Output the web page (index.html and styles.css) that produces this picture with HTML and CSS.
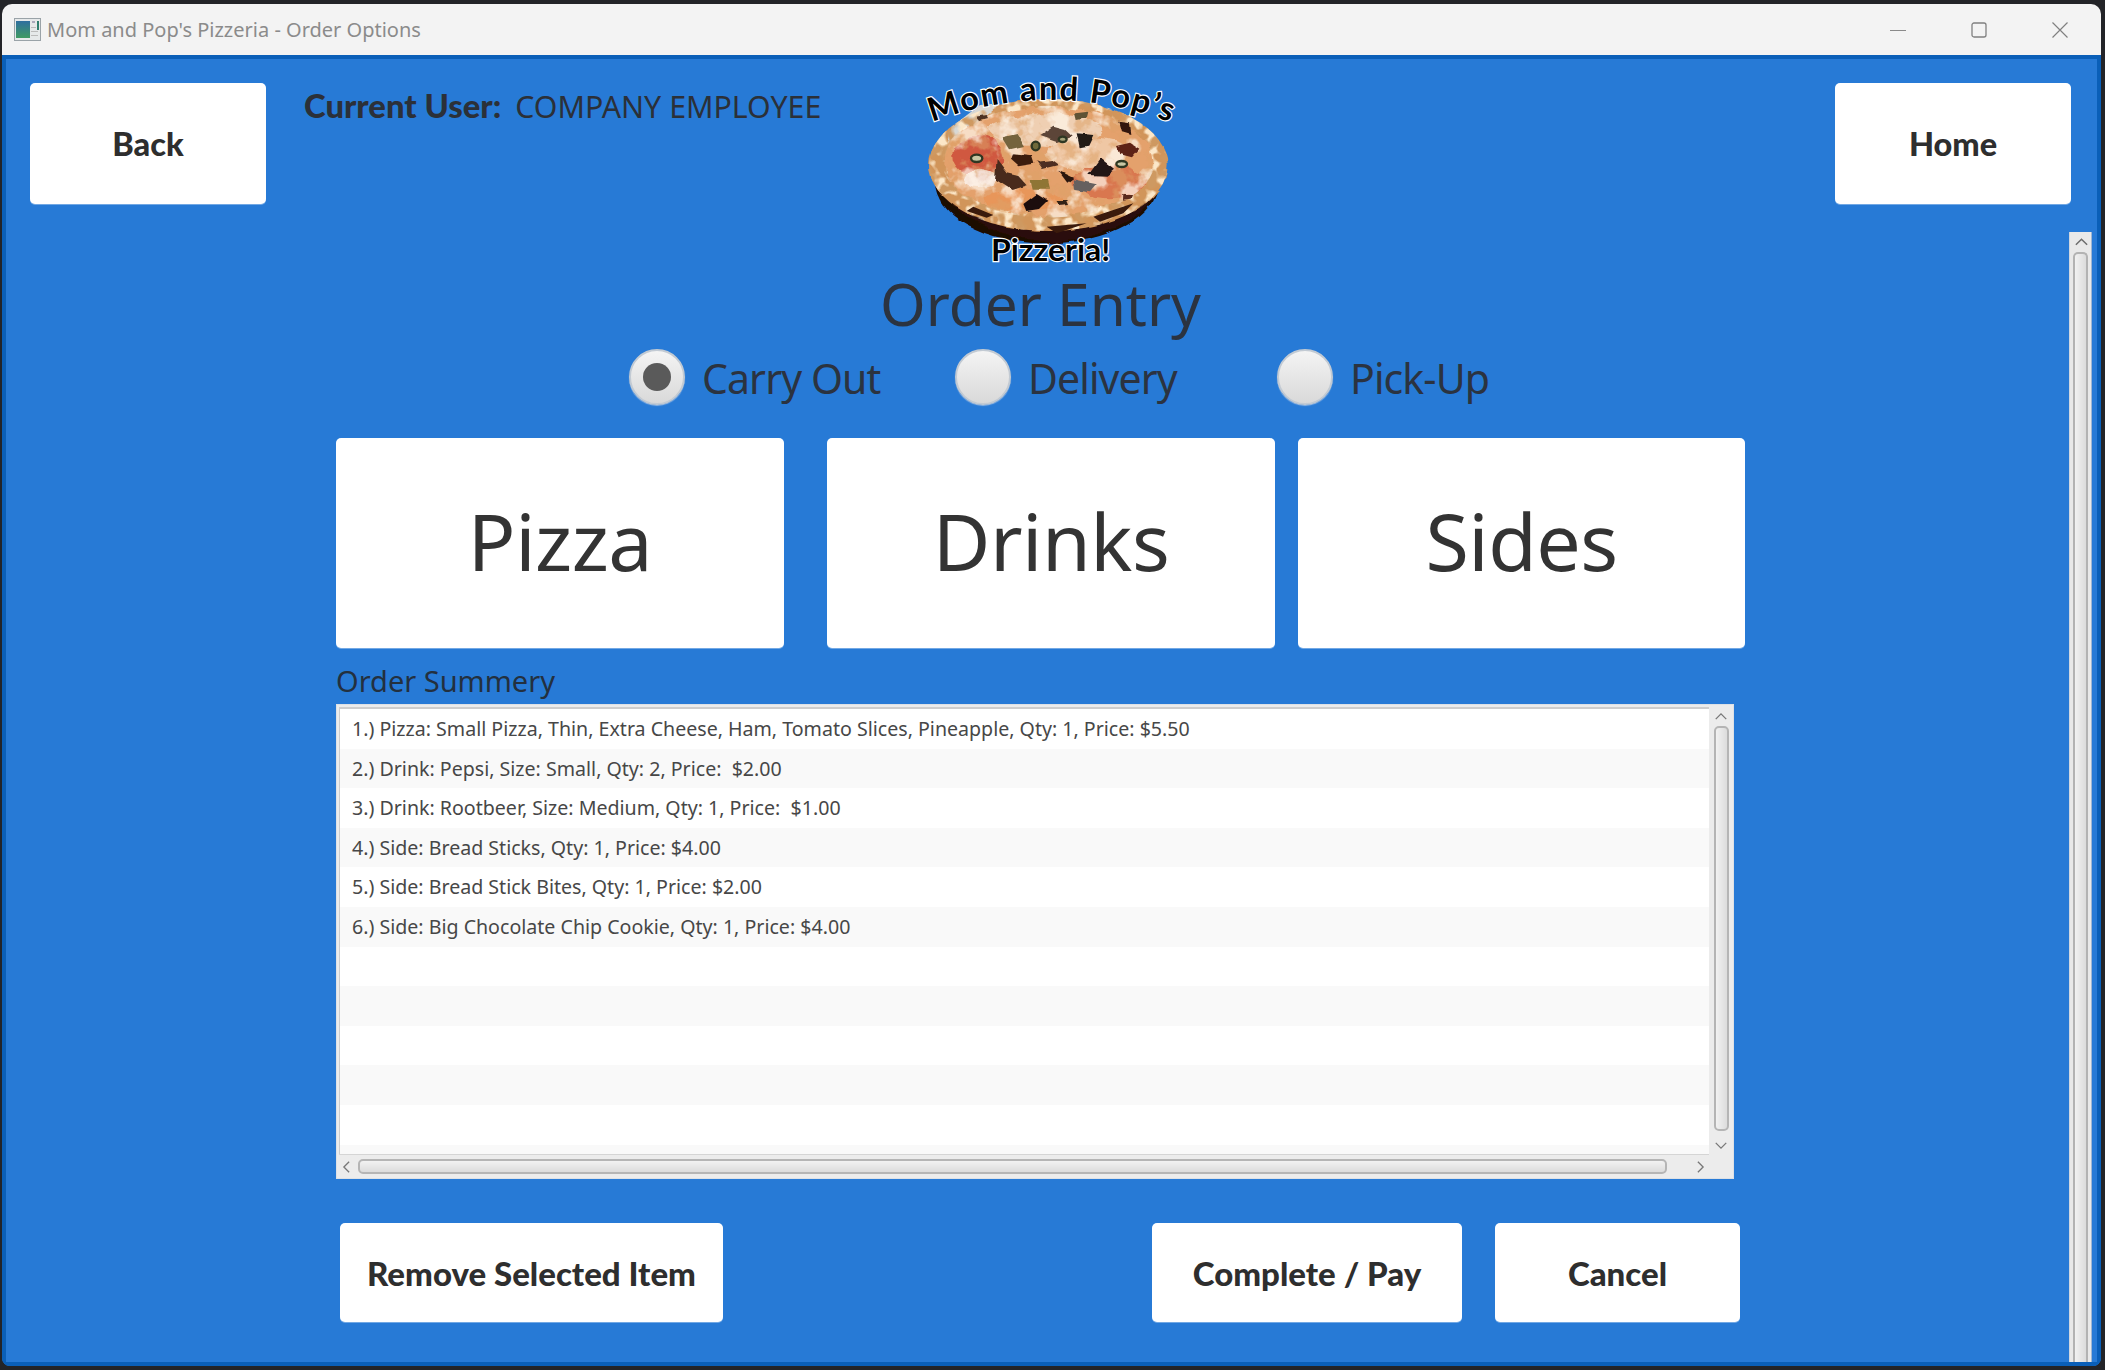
FILE: index.html
```html
<!DOCTYPE html>
<html lang="en">
<head>
<meta charset="utf-8">
<title>Mom and Pop's Pizzeria - Order Options</title>
<link rel="stylesheet" href="styles.css">
</head>
<body>
<div class="window">
  <header class="titlebar">
    <svg class="app-icon" viewBox="0 0 27 23"><rect x=".5" y=".5" width="26" height="22" fill="#e6e9ea" stroke="#9aa3a8"/><defs><linearGradient id="ag" x1="0" y1="0" x2="0" y2="1"><stop offset="0" stop-color="#2f6f9f"/><stop offset="1" stop-color="#3f9a62"/></linearGradient></defs><rect x="2" y="3" width="14" height="17" fill="url(#ag)"/><rect x="18" y="3" width="3" height="2" fill="#aab"/><rect x="23" y="3" width="2" height="9" fill="#2f7f6f"/><rect x="17" y="9" width="5" height="1" fill="#bbb"/><rect x="17" y="13" width="7" height="1" fill="#bbb"/><rect x="17" y="17" width="7" height="1" fill="#bbb"/></svg>
    <span class="title-text">Mom and Pop's Pizzeria - Order Options</span>
    <div class="win-controls">
      <svg viewBox="0 0 16 16"><path d="M0 8.5H16" stroke="#8a8a8a" stroke-width="1"/></svg>
      <svg viewBox="0 0 16 16"><rect x="1" y="1" width="14" height="14" rx="2" fill="none" stroke="#808080" stroke-width="1.3"/></svg>
      <svg viewBox="0 0 16 16"><path d="M.5 .5L15.5 15.5M15.5 .5L.5 15.5" stroke="#808080" stroke-width="1.2"/></svg>
    </div>
  </header>
  <main class="content">
    <div class="page-scroll">
      <svg class="arrow-up" viewBox="0 0 16 10"><path d="M2 8L8 2L14 8" fill="none" stroke="#6d6d6d" stroke-width="1.6"/></svg>
      <div class="page-thumb"></div>
    </div>
    <section class="top-row">
      <button class="btn btn-nav">Back</button>
      <div class="user"><b>Current User:</b><span>COMPANY EMPLOYEE</span></div>
      <svg class="logo" viewBox="0 0 960 660">
        <defs>
          <clipPath id="pz"><ellipse cx="505" cy="335" rx="318" ry="168"/></clipPath>
          <clipPath id="pzc"><ellipse cx="505" cy="345" rx="358" ry="198"/></clipPath>
          <filter id="rough" x="-5%" y="-5%" width="110%" height="110%"><feTurbulence type="fractalNoise" baseFrequency="0.02" numOctaves="3" seed="4" result="n"/><feDisplacementMap in="SourceGraphic" in2="n" scale="30" xChannelSelector="R" yChannelSelector="G"/></filter>
          <filter id="rough2" x="-5%" y="-5%" width="110%" height="110%"><feTurbulence type="fractalNoise" baseFrequency="0.025" numOctaves="2" seed="12" result="n"/><feDisplacementMap in="SourceGraphic" in2="n" scale="14" xChannelSelector="R" yChannelSelector="G"/></filter>
          <filter id="cheese" x="0" y="0" width="100%" height="100%"><feTurbulence type="fractalNoise" baseFrequency="0.014" numOctaves="4" seed="7"/><feColorMatrix values="0 0 0 0 1  0 0 0 0 .93  0 0 0 0 .84  6 0 0 0 -3"/></filter>
          <filter id="sauce" x="0" y="0" width="100%" height="100%"><feTurbulence type="fractalNoise" baseFrequency="0.02" numOctaves="4" seed="31"/><feColorMatrix values="0 0 0 0 .72  0 0 0 0 .36  0 0 0 0 .14  0 6 0 0 -2.9"/></filter>
          <filter id="crustn" x="0" y="0" width="100%" height="100%"><feTurbulence type="fractalNoise" baseFrequency="0.025" numOctaves="2" seed="15"/><feColorMatrix values="0 0 0 0 .62  0 0 0 0 .32  0 0 0 0 .12  6 0 0 0 -3.1"/></filter>
          <filter id="crustl" x="0" y="0" width="100%" height="100%"><feTurbulence type="fractalNoise" baseFrequency="0.03" numOctaves="2" seed="42"/><feColorMatrix values="0 0 0 0 .97  0 0 0 0 .8  0 0 0 0 .58  0 6 0 0 -2.8"/></filter>
          <path id="arc" d="M156 216Q510 84 870 216"/>
        </defs>
        <g filter="url(#rough2)">
          <ellipse cx="500" cy="395" rx="335" ry="185" fill="#1f0805"/>
          <path d="M165 400C200 470 290 530 400 560L520 580C640 565 740 530 800 470L855 390Z" fill="#2a0d07"/>
          <ellipse cx="505" cy="345" rx="358" ry="198" fill="#d1955a"/>
          <path d="M215 230L300 165L360 160L200 300Z" fill="#d8d8d4"/>
        </g>
        <g clip-path="url(#pzc)">
          <rect x="140" y="140" width="730" height="410" filter="url(#crustl)"/>
          <rect x="140" y="140" width="730" height="410" filter="url(#crustn)"/>
        </g>
        <path d="M280 470l60 25-20 8-60-20zM640 500l120-40-30 30-70 25zM500 530l120-10-90 30z" fill="#3a1a0c"/>
        <g filter="url(#rough)">
          <ellipse cx="505" cy="335" rx="312" ry="163" fill="#e4a16c"/>
          <ellipse cx="295" cy="320" rx="75" ry="65" fill="#d0583f"/>
          <ellipse cx="690" cy="395" rx="110" ry="50" fill="#d9774f"/>
          <ellipse cx="430" cy="450" rx="120" ry="32" fill="#e8965a"/>
          <ellipse cx="500" cy="240" rx="170" ry="50" fill="#efcfb2"/>
          <ellipse cx="620" cy="310" rx="120" ry="50" fill="#efc7a4"/>
          <ellipse cx="300" cy="385" rx="50" ry="26" fill="#f3ddd2"/>
        </g>
        <g clip-path="url(#pz)">
          <rect x="140" y="140" width="730" height="410" filter="url(#sauce)" opacity=".55"/>
          <rect x="140" y="140" width="730" height="410" filter="url(#cheese)" opacity=".7"/>
        </g>
        <g filter="url(#rough2)">
          <path d="M400 310l55 6 8 25-48 8-22-20z" fill="#3a1c10"/>
          <path d="M350 330l30 40 35 8 25 28-45 14-50-32z" fill="#4a2c1c"/>
          <path d="M430 462l40-30 32 20-25 25-38 6z" fill="#1f1010"/>
          <path d="M625 375l35-48 42 32-22 18z" fill="#221212"/>
          <path d="M708 288l42-10 28 18-22 26-38-10z" fill="#5d2014"/>
          <path d="M718 215l32 5 4 32-28-8z" fill="#30180f"/>
          <path d="M478 258l42-28 36 10 22 20-48 16z" fill="#5c4537"/>
          <path d="M590 250l50 5-15 32-26 5z" fill="#241b18"/>
          <path d="M535 362l45 22-18 14z" fill="#2c1810"/>
          <path d="M578 388l72 15-20 24-48-8z" fill="#66615f"/>
          <path d="M452 390h52l6 26h-52z" fill="#8f7436"/>
          <path d="M368 262l42-10 22 36-42 10z" fill="#74633e"/>
          <path d="M470 335l45-5 20 15-50 12z" fill="#4d2e20"/>
          <path d="M530 450h32l5 12-32 3z" fill="#332018"/>
          <path d="M730 432h30l-5 14-26 3z" fill="#5a2a1c"/>
          <path d="M585 190l40-5-5 20-30 5z" fill="#5f5234"/>
          <path d="M290 200l30-5 5 12-25 6z" fill="#4e3220"/>
        </g>
        <g fill="none" stroke="#2e3722" stroke-width="7">
          <ellipse cx="290" cy="325" rx="17" ry="11" fill="#c8c7a4"/>
          <ellipse cx="725" cy="342" rx="16" ry="9" fill="#c8c7a4"/>
          <ellipse cx="467" cy="288" rx="12" ry="13" fill="#6f6a3a"/>
          <ellipse cx="548" cy="268" rx="12" ry="8" fill="#a5a27a"/>
        </g>
        <g class="logo-text">
          <text font-size="98"><textPath href="#arc" textLength="730" lengthAdjust="spacing">Mom and Pop’s</textPath></text>
          <text x="333" y="632" font-size="90" textLength="358" lengthAdjust="spacingAndGlyphs">Pizzeria!</text>
        </g>
      </svg>
      <span class="top-spacer"></span>
      <button class="btn btn-nav">Home</button>
    </section>

    <section class="order">
      <h1 class="heading">Order Entry</h1>
      <div class="radios">
        <label class="radio"><span class="radio-dot is-on"></span>Carry Out</label>
        <label class="radio"><span class="radio-dot"></span>Delivery</label>
        <label class="radio"><span class="radio-dot"></span>Pick-Up</label>
      </div>
      <div class="big-row">
        <button class="btn btn-big">Pizza</button>
        <button class="btn btn-big btn-drinks">Drinks</button>
        <button class="btn btn-big btn-sides">Sides</button>
      </div>
      <div class="list-label">Order Summery</div>
      <div class="listbox">
        <ul class="rows">
          <li>1.) Pizza: Small Pizza, Thin, Extra Cheese, Ham, Tomato Slices, Pineapple, Qty: 1, Price: $5.50</li>
          <li>2.) Drink: Pepsi, Size: Small, Qty: 2, Price:&nbsp; $2.00</li>
          <li>3.) Drink: Rootbeer, Size: Medium, Qty: 1, Price:&nbsp; $1.00</li>
          <li>4.) Side: Bread Sticks, Qty: 1, Price: $4.00</li>
          <li>5.) Side: Bread Stick Bites, Qty: 1, Price: $2.00</li>
          <li>6.) Side: Big Chocolate Chip Cookie, Qty: 1, Price: $4.00</li>
          <li></li><li></li><li></li><li></li><li></li><li></li>
        </ul>
        <div class="vscroll">
          <svg class="arr" viewBox="0 0 16 10"><path d="M2 8L8 2L14 8" fill="none" stroke="#777" stroke-width="1.5"/></svg>
          <div class="vthumb"></div>
          <svg class="arr" viewBox="0 0 16 10"><path d="M2 2L8 8L14 2" fill="none" stroke="#777" stroke-width="1.5"/></svg>
        </div>
        <div class="hscroll">
          <svg class="arr-h" viewBox="0 0 10 16"><path d="M8 2L2 8L8 14" fill="none" stroke="#777" stroke-width="1.5"/></svg>
          <div class="hthumb"></div>
          <svg class="arr-h" viewBox="0 0 10 16"><path d="M2 2L8 8L2 14" fill="none" stroke="#777" stroke-width="1.5"/></svg>
        </div>
        <div class="corner"></div>
      </div>
      <div class="actions">
        <button class="btn btn-act btn-remove">Remove Selected Item</button>
        <button class="btn btn-act btn-complete">Complete / Pay</button>
        <button class="btn btn-act btn-cancel">Cancel</button>
      </div>
    </section>
  </main>
</div>
</body>
</html>
```
FILE: styles.css
```css
* { box-sizing: border-box; }
html, body { margin: 0; height: 100%; }
body {
  background: #232428;
  font-family: "Noto Sans", "Open Sans", sans-serif;
  overflow: hidden;
}
.window {
  margin: 4px 4px 0 2px;
  height: 1362px;
  border-radius: 10px 10px 8px 8px;
  overflow: hidden;
  display: flex;
  flex-direction: column;
}
.titlebar {
  height: 51px;
  flex: none;
  background: #f3f3f3;
  display: flex;
  align-items: center;
  padding-left: 12px;
}
.app-icon { width: 27px; height: 23px; flex: none; }
.title-text {
  margin-left: 6px;
  font-size: 20px;
  color: #8b8b8b;
}
.win-controls {
  margin-left: auto;
  display: flex;
  gap: 65px;
  padding-right: 33px;
}
.win-controls svg { width: 16px; height: 16px; display: block; }

.content {
  position: relative;
  flex: 1;
  background: #277ad6;
  border: 4px solid #0a5fb8;
  padding: 24px 26px 0 24px;
}
.page-scroll {
  position: absolute;
  right: 5px;
  top: 173px;
  bottom: 0;
  width: 23px;
  background: #e9e9e9;
  border-left: 1px solid #cfd6df;
  border-right: 1px solid #9fb6d2;
  display: flex;
  flex-direction: column;
  align-items: center;
  padding-top: 5px;
}
.arrow-up { width: 15px; height: 10px; flex: none; margin-left: 1px; }
.page-thumb {
  margin-top: 5px;
  flex: 1;
  width: 15px;
  border: 2px solid #b3b3b3;
  border-bottom: 0;
  border-radius: 5px 5px 0 0;
  background: linear-gradient(90deg, #f2f2f2, #dcdcdc);
}

.btn {
  background: #fff;
  border: 0;
  border-radius: 5px;
  padding: 0;
  font-family: inherit;
  color: #2e2e2e;
  box-shadow: 0 1px 0 rgba(255,255,255,.35);
}
.top-row {
  height: 121px;
  display: grid;
  grid-template-columns: 236px 614px 320px 1fr 236px;
  align-items: start;
}
.btn-nav { height: 121px; font-family: "Lato", sans-serif; font-size: 32.5px; font-weight: 900; }
.user {
  margin-left: 38px;
  margin-top: 3px;
  font-size: 30.3px;
  color: #2b3038;
  display: flex;
  align-items: baseline;
  gap: 14px;
  white-space: nowrap;
}
.user b { font-family: "Lato", sans-serif; font-size: 32.8px; font-weight: 900; }
.logo {
  width: 320px;
  height: 220px;
  margin-top: -33px;
  display: block;
}
.logo-text text {
  font-family: "Lato", sans-serif;
  fill: #000;
  stroke: #fff;
  stroke-width: 7px;
  paint-order: stroke;
  font-weight: 700;
}
.top-spacer { display: block; }

.order {
  width: 1409px;
  margin-left: 306px;
  display: flex;
  flex-direction: column;
}
.heading {
  margin: 64px 0 2px;
  height: 70px;
  line-height: 70px;
  text-align: center;
  font-size: 58.5px;
  font-weight: 400;
  color: #2b3340;
}
.radios {
  margin: 9px 0 0 293px;
  display: grid;
  grid-template-columns: 326px 322px auto;
}
.radio {
  display: flex;
  align-items: center;
  gap: 17px;
  font-size: 41px;
  letter-spacing: -.9px;
  height: 56px;
  padding-top: 2px;
  color: #2b3340;
  line-height: 58px;
}
.radio-dot {
  width: 56px;
  height: 56px;
  flex: none;
  margin-top: -2px;
  border-radius: 50%;
  background: linear-gradient(#f4f4f4, #d9d9d9);
  border: 2px solid #c2cad3;
  box-shadow: 0 1px 1px #8fb5e3;
  display: flex;
  align-items: center;
  justify-content: center;
}
.radio-dot.is-on::after {
  content: "";
  width: 28px;
  height: 28px;
  border-radius: 50%;
  background: #5a5a5a;
}
.big-row { display: flex; margin-top: 33px; }
.btn-big { width: 448px; height: 210px; font-size: 79px; letter-spacing: -.5px; font-weight: 400; color: #333; padding-bottom: 6px; }
.btn-drinks { margin-left: 43px; }
.btn-sides { margin-left: 23px; width: 447px; }
.list-label {
  margin-top: 11px;
  height: 45px;
  line-height: 44px;
  font-size: 29px;
  color: #23303f;
}
.listbox {
  width: 1398px;
  height: 475px;
  border: 1px solid #dde1e6;
  background: #ececec;
  padding: 2px 0 0 2px;
  display: grid;
  grid-template-columns: 1fr 24px;
  grid-template-rows: 1fr 24px;
}
.rows {
  list-style: none;
  margin: 0;
  padding: 0;
  background: #fff;
  overflow: hidden;
  border-left: 1px solid #cdcdcd;
  border-top: 2px solid #cdcdcd;
}
.rows li {
  height: 39.6px;
  line-height: 39.6px;
  padding-left: 12px;
  font-size: 19.6px;
  color: #474747;
  white-space: nowrap;
}
.rows li:nth-child(even) { background: #f9f9f9; }
.vscroll {
  display: flex;
  flex-direction: column;
  align-items: center;
  padding: 5px 0 4px;
  background: #ececec;
}
.arr { width: 14px; height: 9px; flex: none; }
.vthumb {
  flex: 1;
  margin: 5px 0 10px;
  width: 15px;
  border: 2px solid #b5b5b5;
  border-radius: 5px;
  background: linear-gradient(90deg, #f2f2f2, #dcdcdc);
}
.hscroll {
  display: flex;
  align-items: center;
  padding: 0 4px 0 3px;
  background: #ececec;
  border-top: 1px solid #d5d5d5;
}
.arr-h { width: 9px; height: 14px; flex: none; }
.hthumb {
  flex: 1;
  margin: 0 29px 0 7px;
  height: 15px;
  border: 2px solid #b5b5b5;
  border-radius: 5px;
  background: linear-gradient(#f2f2f2, #dcdcdc);
}
.corner { background: #ececec; }

.actions { display: flex; margin: 44px 0 0 4px; }
.btn-act { height: 99px; font-family: "Lato", sans-serif; font-size: 33px; font-weight: 900; }
.btn-remove { width: 383px; }
.btn-complete { width: 310px; margin-left: 429px; }
.btn-cancel { width: 245px; margin-left: 33px; }
```
